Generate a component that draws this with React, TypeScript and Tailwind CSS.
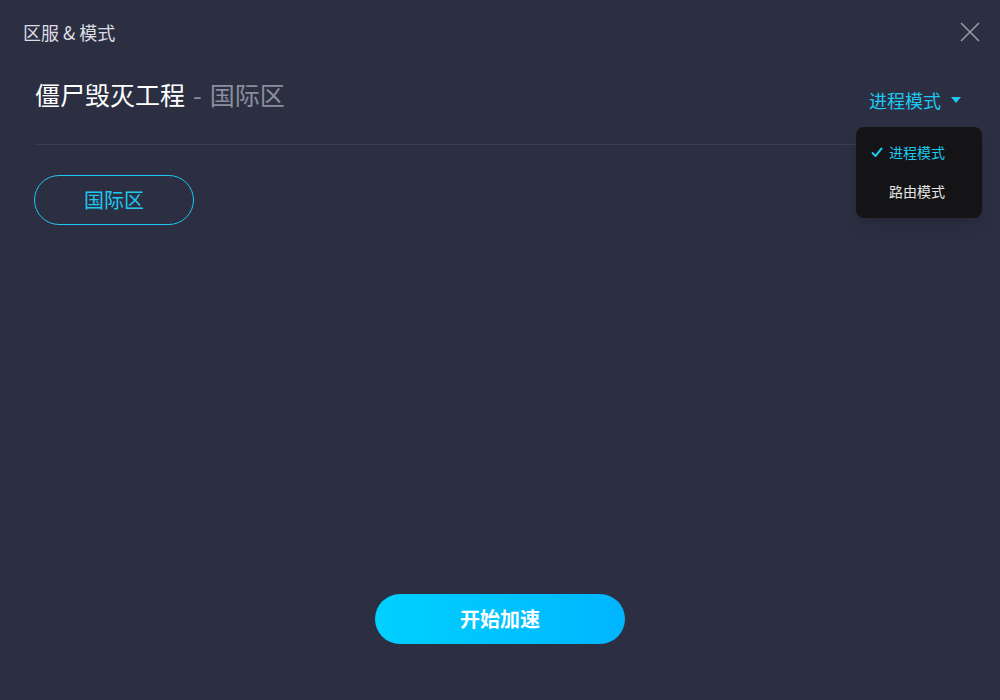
import React from 'react';

const font = { fontFamily: '"Noto Sans CJK SC", "Noto Sans", sans-serif' };

const CloseIcon: React.FC = () => (
  <svg width="20" height="20" viewBox="0 0 20 20" fill="none" stroke="#9a9dab" strokeWidth="1.5">
    <path d="M1 1 L19 19 M19 1 L1 19" />
  </svg>
);

const ModeDropdown: React.FC = () => (
  <div className="relative">
    <button className="flex items-center gap-[10px] text-[18px] text-[#1ec8f0] leading-none pt-[6px]">
      进程模式
      <svg width="10" height="6" viewBox="0 0 10 6">
        <path d="M0 0 L10 0 L5 6 Z" fill="#1ec8f0" />
      </svg>
    </button>
    <div className="absolute right-[-21px] top-[42px] w-[126px] h-[91px] bg-[#141417] rounded-[8px] shadow-lg flex flex-col pt-[18px] gap-[25px] text-[14px] leading-none z-10">
      <div className="flex items-center text-[#1ec8f0] pl-[15px]">
        <svg width="12" height="10" viewBox="0 0 12 10" className="mr-[6px]">
          <path d="M1 5.5 L4.5 9 L11 1" fill="none" stroke="#1ec8f0" strokeWidth="2" />
        </svg>
        进程模式
      </div>
      <div className="text-[#e4e4e4] pl-[33px]">路由模式</div>
    </div>
  </div>
);

export default function App() {
  return (
    <div className="w-[1000px] h-[700px] bg-[#2c2f42] flex flex-col text-white" style={font}>
      {/* Header */}
      <div className="h-[64px] flex items-center justify-between pl-[23px] pr-[20px]">
        <span className="text-[18px] text-[#dcdde2]">区服 &amp; 模式</span>
        <CloseIcon />
      </div>

      {/* Game title + mode */}
      <div className="mx-[35px] mt-[13px] flex items-center justify-between h-[68px] border-b border-[#3a3d52] pr-[4px]">
        <div className="text-[25px] leading-none -mt-[32px] flex items-center">
          <span className="text-white">僵尸毁灭工程</span>
          <span className="text-[#8a8e9c] mx-[8px]">-</span>
          <span className="text-[#8a8e9c]">国际区</span>
        </div>
        <div className="-mt-[28px]">
          <ModeDropdown />
        </div>
      </div>

      {/* Regions */}
      <div className="px-[34px] pt-[30px] flex-1">
        <button className="w-[160px] h-[50px] rounded-full border border-[#1ec8f0] text-[#1ec8f0] text-[20px]">
          国际区
        </button>
      </div>

      {/* Start */}
      <div className="flex justify-center pb-[56px]">
        <button className="w-[250px] h-[50px] rounded-full bg-gradient-to-r from-[#00d0ff] to-[#00b6ff] text-white text-[20px] font-bold">
          开始加速
        </button>
      </div>
    </div>
  );
}
